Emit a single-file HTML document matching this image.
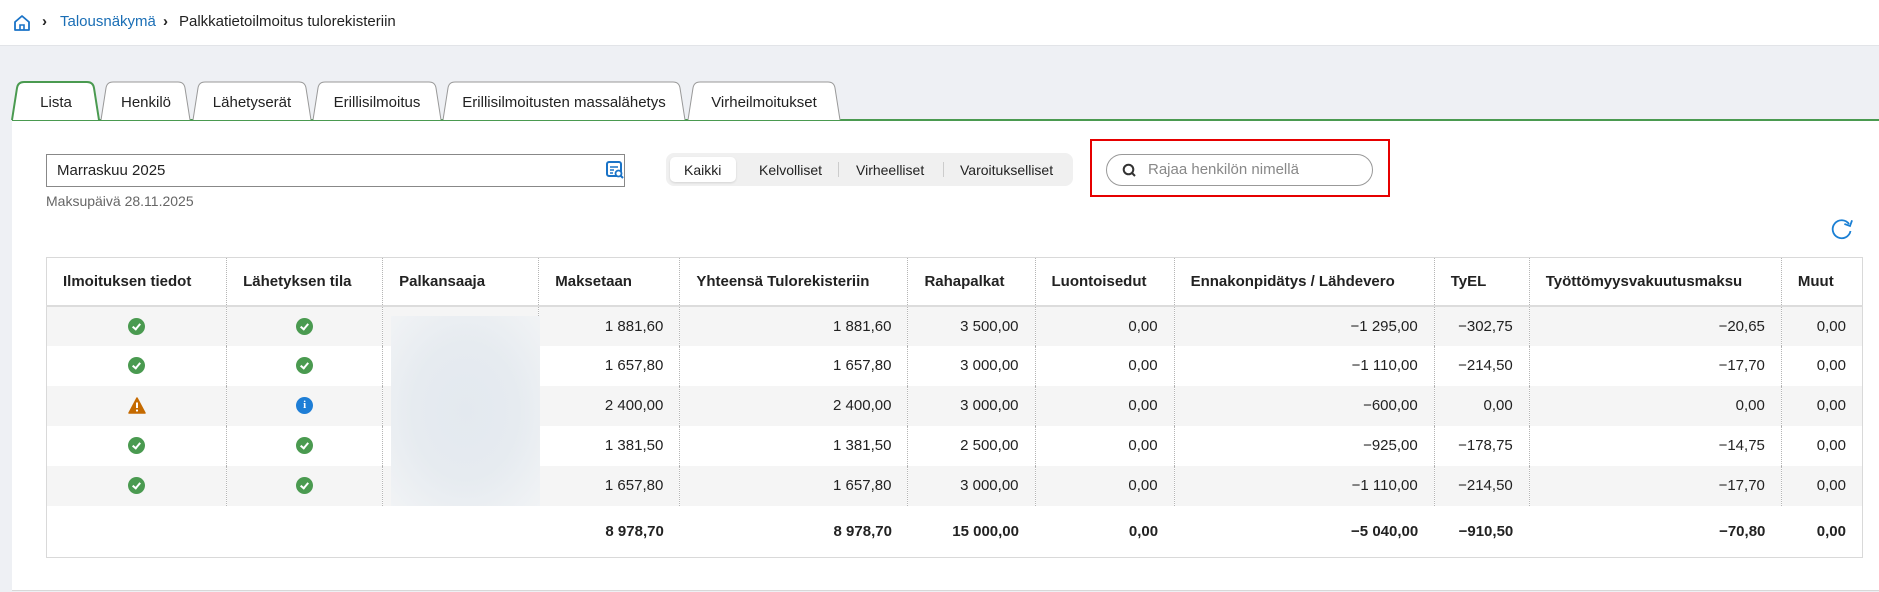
<!DOCTYPE html>
<html><head><meta charset="utf-8"><style>
*{box-sizing:border-box;margin:0;padding:0}
body{width:1879px;height:592px;background:#eef0f4;font-family:"Liberation Sans",sans-serif;color:#222;position:relative;overflow:hidden}
.top{position:absolute;left:0;top:0;width:1879px;height:46px;background:#fff;border-bottom:1px solid #e2e4e8}
.bc{position:absolute;top:13px;font-size:15px;white-space:nowrap}
.panel{position:absolute;left:12px;top:121px;right:0;height:470px;background:#fff;border-bottom:1px solid #d8d8d8}
.abs{position:absolute;white-space:nowrap}
table{position:absolute;left:46px;top:257px;border-collapse:collapse;table-layout:fixed;width:1817px;border:1px solid #d9d9d9;font-size:15px}
td,th{height:40px;padding:0 16px;text-align:right;white-space:nowrap;overflow:hidden}
th{height:48px;font-weight:bold;text-align:left;color:#222;border-bottom:2px solid #dcdcdc;font-size:15px}
td+td,th+th{border-left:1px dotted #b5b5b5}
tbody tr:nth-child(odd){background:#f5f5f5}
tr.tot td{height:52px;font-weight:bold;border-left:none;background:#fff}
td.c{text-align:center}
.ok{display:inline-block;width:17px;height:17px;border-radius:50%;background:#4a9a50;vertical-align:middle;position:relative}
.ok:after{content:"";position:absolute;left:6px;top:4px;width:3px;height:6px;border:solid #fff;border-width:0 2px 2px 0;transform:rotate(40deg)}
.info{display:inline-block;width:17px;height:17px;border-radius:50%;background:#1e7ed6;color:#fff;font-size:11px;font-weight:bold;line-height:17px;text-align:center;vertical-align:middle;font-family:"Liberation Serif",serif}
</style></head><body>
<div class="top">
<svg class="abs" style="left:13px;top:14px" width="18" height="18" viewBox="0 0 18 18"><path d="M2 8 L9 2 L16 8 V16 H2 Z" fill="none" stroke="#1a73c7" stroke-width="1.8" stroke-linejoin="round"/><path d="M7 16 V11 H11 V16" fill="none" stroke="#1a73c7" stroke-width="1.6"/></svg>
<div class="bc" style="left:42px;font-weight:bold">›</div>
<div class="bc" style="left:60px;color:#1a6eb5">Talousnäkymä</div>
<div class="bc" style="left:163px;font-weight:bold">›</div>
<div class="bc" style="left:179px">Palkkatietoilmoitus tulorekisteriin</div>
</div>
<div class="panel"></div>
<svg class="abs" style="left:0;top:78px" width="1879" height="46" viewBox="0 78 1879 46">
<rect x="12" y="119" width="1867" height="2" fill="#4a9a50"/>
<g fill="#fff" stroke="#999" stroke-width="1">
<path d="M101 120 L106 88 Q107 82 113 82 L178 82 Q184 82 185 88 L190 120"/>
<path d="M193 120 L198 88 Q199 82 205 82 L299 82 Q305 82 306 88 L311 120"/>
<path d="M313 120 L318 88 Q319 82 325 82 L429 82 Q435 82 436 88 L441 120"/>
<path d="M443 120 L448 88 Q449 82 455 82 L673 82 Q679 82 680 88 L685 120"/>
<path d="M688 120 L693 88 Q694 82 700 82 L828 82 Q834 82 835 88 L840 120"/>
</g>
<path d="M12 120 L17 88 Q18 82 24 82 L87 82 Q93 82 94 88 L99 120 Z" fill="#fff" stroke="none"/>
<path d="M12 120 L17 88 Q18 82 24 82 L87 82 Q93 82 94 88 L99 120" fill="none" stroke="#4a9a50" stroke-width="2"/>
<g font-family="Liberation Sans" font-size="15" fill="#222" text-anchor="middle">
<text x="56" y="107">Lista</text><text x="146" y="107">Henkilö</text><text x="252" y="107">Lähetyserät</text><text x="377" y="107">Erillisilmoitus</text><text x="564" y="107">Erillisilmoitusten massalähetys</text><text x="764" y="107">Virheilmoitukset</text>
</g></svg>

<div class="abs" style="left:46px;top:154px;width:579px;height:33px;border:1px solid #888"></div>
<div class="abs" style="left:57px;top:162px;font-size:15px">Marraskuu 2025</div>
<svg class="abs" style="left:606px;top:161px" width="18" height="18" viewBox="0 0 18 18"><rect x="1" y="1" width="14" height="14" rx="2" fill="none" stroke="#1a73c7" stroke-width="2"/><path d="M4 6h8M4 9h4M4 12h3" stroke="#1a73c7" stroke-width="1.6"/><circle cx="12.5" cy="12.5" r="3" fill="#fff" stroke="#1a73c7" stroke-width="1.8"/><path d="M14.5 14.5 L17 17" stroke="#1a73c7" stroke-width="2"/></svg>
<div class="abs" style="left:46px;top:193px;font-size:14px;color:#666">Maksupäivä 28.11.2025</div>

<div class="abs" style="left:666px;top:153px;width:407px;height:33px;border-radius:8px;background:#f0f0f0"></div>
<div class="abs" style="left:670px;top:157px;width:66px;height:25px;border-radius:5px;background:#fff;box-shadow:0 1px 2px rgba(0,0,0,.12)"></div>
<div class="abs" style="left:684px;top:162px;font-size:14px">Kaikki</div>
<div class="abs" style="left:759px;top:162px;font-size:14px">Kelvolliset</div>
<div class="abs" style="left:838px;top:162px;width:1px;height:15px;background:#ccc"></div>
<div class="abs" style="left:856px;top:162px;font-size:14px">Virheelliset</div>
<div class="abs" style="left:943px;top:162px;width:1px;height:15px;background:#ccc"></div>
<div class="abs" style="left:960px;top:162px;font-size:14px">Varoitukselliset</div>

<div class="abs" style="left:1090px;top:139px;width:300px;height:58px;border:2px solid #e60000"></div>
<div class="abs" style="left:1106px;top:154px;width:267px;height:32px;border:1px solid #999;border-radius:16px"></div>
<svg class="abs" style="left:1122px;top:163px" width="15" height="15" viewBox="0 0 15 15"><circle cx="6.5" cy="6.5" r="4.8" fill="none" stroke="#333" stroke-width="2"/><path d="M10 10 L13 13" stroke="#333" stroke-width="2"/></svg>
<div class="abs" style="left:1148px;top:161px;font-size:15px;color:#888">Rajaa henkilön nimellä</div>

<svg class="abs" style="left:1830px;top:217px" width="24" height="24" viewBox="0 0 24 24"><path d="M19 7 A9 9 0 1 0 20.5 14" fill="none" stroke="#1a7fd4" stroke-width="1.8"/><path d="M14 9 L20 9 L20 3" fill="none" stroke="#1a7fd4" stroke-width="1.8" transform="rotate(20 20 9)"/></svg>

<table>
<colgroup><col style="width:180px"><col style="width:156px"><col style="width:156px"><col style="width:141px"><col style="width:228px"><col style="width:127px"><col style="width:139px"><col style="width:260px"><col style="width:95px"><col style="width:252px"><col style="width:81px"></colgroup>
<thead><tr><th>Ilmoituksen tiedot</th><th>Lähetyksen tila</th><th>Palkansaaja</th><th>Maksetaan</th><th>Yhteensä Tulorekisteriin</th><th>Rahapalkat</th><th>Luontoisedut</th><th>Ennakonpidätys / Lähdevero</th><th>TyEL</th><th>Työttömyysvakuutusmaksu</th><th>Muut</th></tr></thead>
<tbody>
<tr><td class="c"><span class="ok"></span></td><td class="c"><span class="ok"></span></td><td></td><td>1 881,60</td><td>1 881,60</td><td>3 500,00</td><td>0,00</td><td>−1 295,00</td><td>−302,75</td><td>−20,65</td><td>0,00</td></tr>
<tr><td class="c"><span class="ok"></span></td><td class="c"><span class="ok"></span></td><td></td><td>1 657,80</td><td>1 657,80</td><td>3 000,00</td><td>0,00</td><td>−1 110,00</td><td>−214,50</td><td>−17,70</td><td>0,00</td></tr>
<tr><td class="c"><svg width="18" height="17" viewBox="0 0 18 17" style="vertical-align:middle"><path d="M9 1 L17 16 H1 Z" fill="#c56a00" stroke="#c56a00" stroke-width="1.5" stroke-linejoin="round"/><path d="M9 5.5 V11" stroke="#fff" stroke-width="2"/><circle cx="9" cy="13.5" r="1.1" fill="#fff"/></svg></td><td class="c"><span class="info">i</span></td><td></td><td>2 400,00</td><td>2 400,00</td><td>3 000,00</td><td>0,00</td><td>−600,00</td><td>0,00</td><td>0,00</td><td>0,00</td></tr>
<tr><td class="c"><span class="ok"></span></td><td class="c"><span class="ok"></span></td><td></td><td>1 381,50</td><td>1 381,50</td><td>2 500,00</td><td>0,00</td><td>−925,00</td><td>−178,75</td><td>−14,75</td><td>0,00</td></tr>
<tr><td class="c"><span class="ok"></span></td><td class="c"><span class="ok"></span></td><td></td><td>1 657,80</td><td>1 657,80</td><td>3 000,00</td><td>0,00</td><td>−1 110,00</td><td>−214,50</td><td>−17,70</td><td>0,00</td></tr>
<tr class="tot"><td></td><td></td><td></td><td>8 978,70</td><td>8 978,70</td><td>15 000,00</td><td>0,00</td><td>−5 040,00</td><td>−910,50</td><td>−70,80</td><td>0,00</td></tr>
</tbody></table>
<div class="abs" style="left:391px;top:316px;width:149px;height:190px;z-index:5;background:radial-gradient(ellipse at 50% 50%,#e3e9ef 0%,#e6ebf0 50%,#f1f3f5 100%)"></div>
</body></html>
